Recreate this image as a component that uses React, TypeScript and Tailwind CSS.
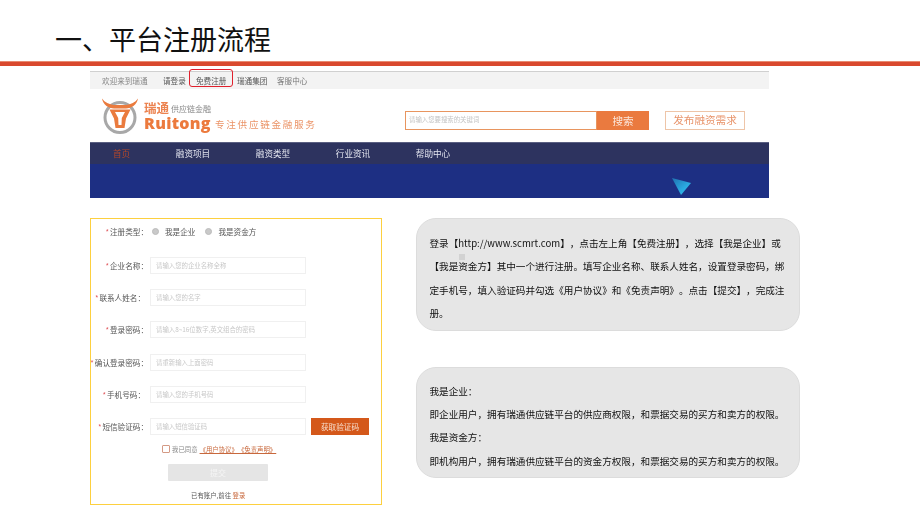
const cjk = "font-['Noto_Sans_CJK_SC','Noto_Sans',sans-serif]";

const fields = [
  { label: '企业名称：', ph: '请输入您的企业名称全称', nudge: 'w-[57px]' },
  { label: '联系人姓名：', ph: '请输入您的名字', nudge: 'w-[54px] mr-[3px]' },
  { label: '登录密码：', ph: '请输入8~16位数字,英文组合的密码', nudge: 'w-[57px]' },
  { label: '确认登录密码：', ph: '请重新输入上面密码', nudge: 'w-[57px]' },
  { label: '手机号码：', ph: '请输入您的手机号码', nudge: 'w-[54px] mr-[3px]' },
];

function Label({ text, nudge }: { text: string; nudge: string }) {
  return (
    <div className={`${nudge} shrink-0 text-[7.6px] leading-[17px] text-[#555] whitespace-nowrap flex justify-end`}>
      <span className="mr-px text-[#e0555a]">*</span>
      <span>{text}</span>
    </div>
  );
}

function Input({ ph }: { ph: string }) {
  return (
    <div className="w-[156px] h-[17px] border border-[#f0f0f0] bg-white pl-[5px] text-[6.4px] leading-[15px] text-[#c8c8c8] whitespace-nowrap overflow-hidden">
      {ph}
    </div>
  );
}

function Logo() {
  return (
    <svg width="40" height="38" viewBox="0 0 40 38" className="shrink-0">
      <circle cx="18" cy="20.5" r="15" fill="none" stroke="#a8a8a8" strokeWidth="3" />
      <path d="M0 1.5 C1 8 7 11.5 12 11.5 L24 11.5 C29 11.5 35 8 36 1.5 C33 5.5 29 7.5 24 8 L12 8 C7 7.5 3 5.5 0 1.5 Z" fill="#ea7b3e" />
      <path d="M7.5 12.5 L28.5 12.5 L24 21.5 L22.5 31 L13.5 31 L12 21.5 Z" fill="#ea7b3e" />
      <path d="M13 15 L23 15 L19.8 21 L19.5 28 L16.5 28 L16.2 21 Z" fill="#ffffff" />
    </svg>
  );
}

export default function App() {
  return (
    <div className={`w-[920px] h-[518px] bg-white overflow-hidden [text-spacing-trim:space-all] ${cjk}`}>
      <div className="h-[61px] pl-[55px] pt-[20px] text-[27px] leading-[38px] text-[#111] whitespace-nowrap">
        一、平台注册流程
      </div>
      <div className="h-[5px] bg-[#d9492e] border-t border-[#e88a70]" />

      {/* website screenshot */}
      <div className="ml-[90px] mt-[5px] w-[679px] blur-[0.45px]">
        <div className="h-[18px] bg-[#f3f3f3] border-t border-[#d0d0d0] flex items-center text-[7.6px] text-[#666] whitespace-nowrap">
          <span className="ml-[12px] w-[61px] text-[#888]">欢迎来到瑞通</span>
          <span className="w-[33px] text-[#555]">请登录</span>
          <span className="relative w-[41px] text-[#555]">
            免费注册
            <span className="absolute left-[-7px] top-[-5.5px] w-[44px] h-[18px] border border-[#e0202c] rounded-[3px]" />
          </span>
          <span className="w-[40px] text-[#555]">瑞通集团</span>
          <span className="text-[#777]">客服中心</span>
        </div>

        <div className="h-[53px] flex items-center pl-[12px]">
          <Logo />
          <div className="ml-[2px] w-[71px] whitespace-nowrap">
            <div className="flex items-end h-[15px]">
              <span className="text-[12.5px] leading-[15px] font-bold text-[#ec8350]">瑞通</span>
              <span className="ml-[2px] text-[8px] leading-[12px] text-[#888]">供应链金融</span>
            </div>
            <div className="text-[16px] leading-[16px] font-['Open_Sans',sans-serif] font-extrabold tracking-[0.3px] text-[#ec7a3d]">
              Ruitong
            </div>
          </div>
          <div className="mt-[17px] w-[103px] text-[9.6px] leading-[14px] tracking-[1.7px] text-[#eb9468] whitespace-nowrap">
            专注供应链金融服务
          </div>
          <div className="ml-[87px] mt-[10px] flex h-[19px] w-[244px]">
            <div className="w-[192px] border-[1.5px] border-[#e8955f] pl-[3px] text-[6.4px] leading-[16px] text-[#c4c4c4] whitespace-nowrap overflow-hidden">
              请输入您要搜索的关键词
            </div>
            <div className="w-[52px] bg-[#ea7a3f] text-center text-[10.6px] leading-[19px] text-[#fbe6da]">搜索</div>
          </div>
          <div className="ml-[16px] mt-[10px] w-[80px] h-[19px] border-[1.5px] border-[#eec5a8] text-center text-[10.6px] leading-[16px] text-[#e8946b] whitespace-nowrap">
            发布融资需求
          </div>
        </div>

        <div className="h-[22px] bg-[#2d335f] border-t border-[#5a5f82] flex items-center text-[8.6px] text-[#e4e6f0] whitespace-nowrap">
          <span className="w-[63px] text-center text-[#b4482a]">首页</span>
          <span className="w-[80px] text-center">融资项目</span>
          <span className="w-[80px] text-center">融资类型</span>
          <span className="w-[80px] text-center">行业资讯</span>
          <span className="w-[80px] text-center">帮助中心</span>
        </div>

        <div className="relative h-[34px] bg-[#1d2f83]">
          <svg width="20" height="18" viewBox="0 0 20 18" className="absolute left-[582px] top-[14px]">
            <defs>
              <linearGradient id="tri" x1="0" y1="0" x2="1" y2="1">
                <stop offset="0" stopColor="#1f6fb0" />
                <stop offset="0.6" stopColor="#2aa9e0" />
                <stop offset="1" stopColor="#35c4ee" />
              </linearGradient>
            </defs>
            <path d="M0 0 L19 5 L9 17 Z" fill="url(#tri)" />
          </svg>
        </div>
      </div>

      <div className="ml-[90px] mt-[20px] flex items-start">
        {/* form */}
        <div className="w-[292px] h-[287px] border-[1.5px] border-[#fdd03f] pt-[4px] blur-[0.45px]">
          <div className="flex h-[17px] items-center">
            <Label text="注册类型：" nudge="w-[57px]" />
            <div className="ml-[4px] flex items-center text-[7.6px] text-[#555] whitespace-nowrap">
              <span className="w-[6.5px] h-[6.5px] rounded-full bg-[#c9c9c9] border border-[#bbb]" />
              <span className="ml-[6.5px]">我是企业</span>
              <span className="ml-[10px] w-[6.5px] h-[6.5px] rounded-full bg-[#c9c9c9] border border-[#bbb]" />
              <span className="ml-[6.5px]">我是资金方</span>
            </div>
          </div>

          <div className="mt-[16.5px] flex flex-col gap-[15.4px]">
            {fields.map((f) => (
              <div key={f.label} className="flex h-[17px] items-center gap-[2px]">
                <Label text={f.label} nudge={f.nudge} />
                <Input ph={f.ph} />
              </div>
            ))}
            <div className="flex h-[17px] items-center gap-[2px]">
              <Label text="短信验证码：" nudge="w-[57px]" />
              <Input ph="请输入短信验证码" />
              <div className="ml-[3px] w-[58px] h-[17px] bg-[#d4581a] text-center text-[7.6px] leading-[17px] text-[#f7ddcc] whitespace-nowrap">
                获取验证码
              </div>
            </div>
          </div>

          <div className="ml-[71px] mt-[10px] flex h-[8px] items-center text-[6.4px] whitespace-nowrap">
            <span className="w-[8px] h-[8px] border border-[#d49a85] rounded-[1px]" />
            <span className="ml-[2px] text-[#888]">我已同意</span>
            <span className="ml-[2px] text-[#c8683c] underline">《用户协议》《免责声明》</span>
          </div>

          <div className="ml-[77px] mt-[11px] w-[100px] h-[17px] bg-[#e5e5e5] rounded-[1px] text-center text-[8px] leading-[17px] text-[#f5f5f5]">
            提交
          </div>

          <div className="mt-[10px] ml-[100px] text-[6.4px] leading-[10px] text-[#555] whitespace-nowrap">
            已有账户,前往 <span className="text-[#c8683c]">登录</span>
          </div>
        </div>

        {/* notes */}
        <div className="ml-[34px] w-[384px] flex flex-col gap-[36px]">
          <div className="relative h-[113px] rounded-[20px] bg-[#e6e6e6] border border-[#dcdcdc] pl-[12.5px] pt-[12.5px] text-[9.6px] leading-[23.6px] text-[#111] whitespace-nowrap blur-[0.2px]">
            <div>登录【http://www.scmrt.com】，点击左上角【免费注册】，选择【我是企业】或</div>
            <div>【我是资金方】其中一个进行注册。填写企业名称、联系人姓名，设置登录密码，绑</div>
            <div>定手机号，填入验证码并勾选《用户协议》和《免责声明》。点击【提交】，完成注</div>
            <div>册。</div>
            <span className="absolute left-[42px] top-[35px] w-[6px] h-[6px] bg-[#d2d2d2]" />
          </div>
          <div className="h-[111px] rounded-[20px] bg-[#e6e6e6] border border-[#dcdcdc] pl-[12.5px] pt-[12px] text-[9.6px] leading-[23.2px] text-[#111] whitespace-nowrap blur-[0.2px]">
            <div>我是企业：</div>
            <div>即企业用户，拥有瑞通供应链平台的供应商权限，和票据交易的买方和卖方的权限。</div>
            <div>我是资金方：</div>
            <div>即机构用户，拥有瑞通供应链平台的资金方权限，和票据交易的买方和卖方的权限。</div>
          </div>
        </div>
      </div>
    </div>
  );
}
